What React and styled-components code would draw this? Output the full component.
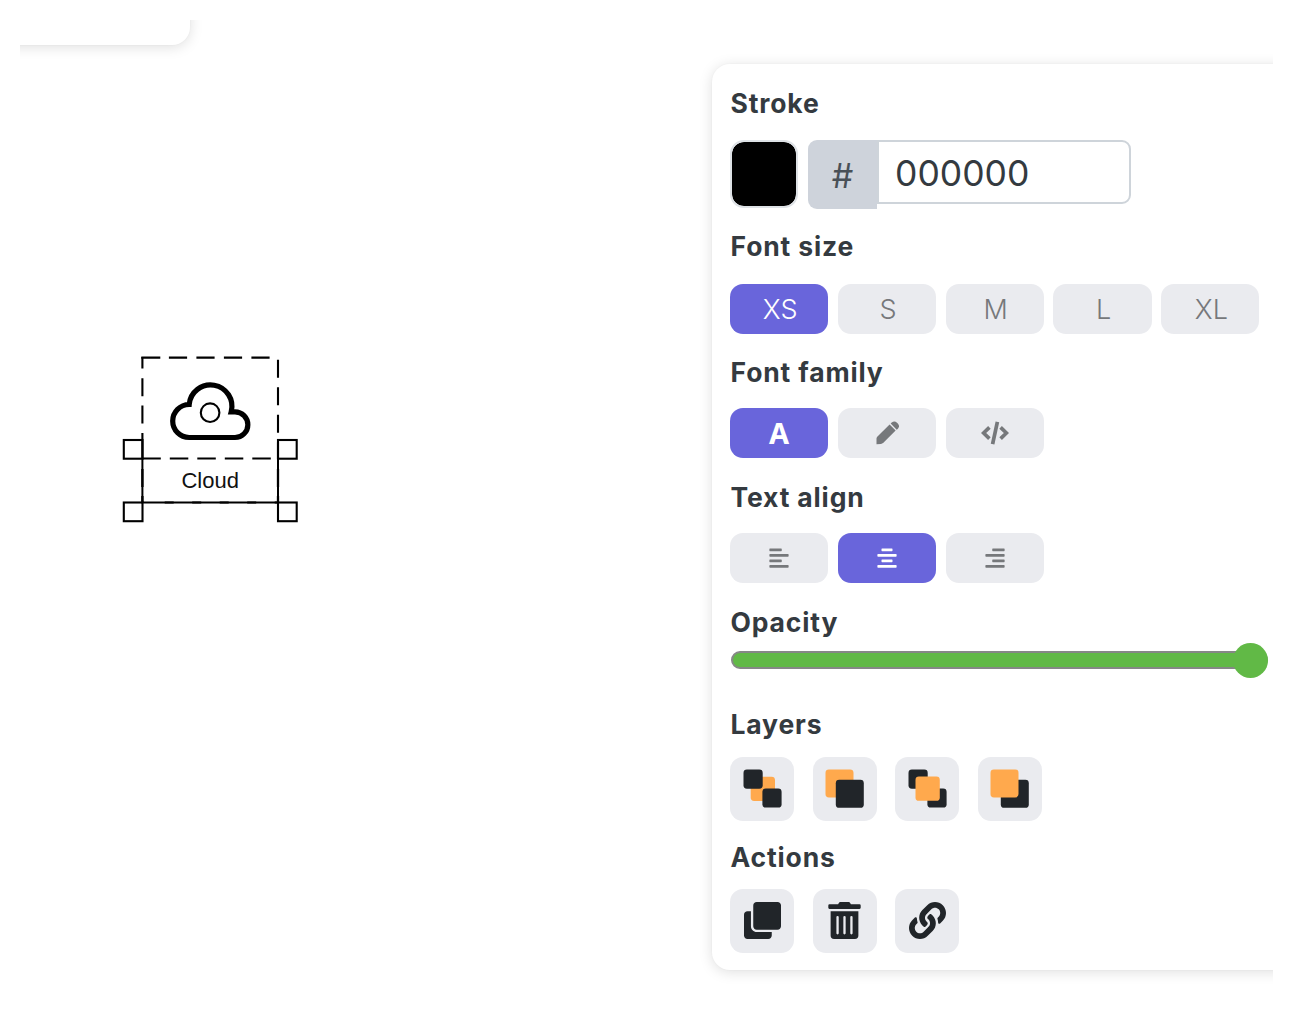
import React from "react";
import styled, { createGlobalStyle } from "styled-components";
import { FaAlignLeft, FaAlignCenter, FaAlignRight, FaClone, FaTrashAlt, FaLink } from "react-icons/fa";

const Global = createGlobalStyle`
  * { box-sizing: border-box; }
  body { margin: 0; background: #fff; }
`;

const Page = styled.div`
  width: 1293px;
  height: 1027px;
  padding: 20px;
  font-family: Inter, "Liberation Sans", sans-serif;
  color: #343a40;
`;

const Viewport = styled.main`
  width: 1253px;
  height: 987px;
  overflow: hidden;
  display: grid;
  grid-template-columns: 692px 600px;
  align-items: start;
`;

const Board = styled.section`
  display: flex;
  flex-direction: column;
  align-items: flex-start;
`;

const shadow = "0 0 0 1px rgba(0,0,0,0.012), 0 2px 14px rgba(0,0,0,0.13)";

const Toolbar = styled.header`
  width: 190px;
  height: 45px;
  margin: -20px 0 0 -20px;
  border-radius: 0 0 18px 0;
  box-shadow: ${shadow};
`;

const Drawing = styled.svg`
  display: block;
  width: 190px;
  height: 190px;
  margin: 300px 0 0 95px;
`;

const Panel = styled.aside`
  margin-top: 44px;
  height: 906px;
  padding: 26px 18px 0;
  border-radius: 18px;
  background: #fff;
  box-shadow: ${shadow};
`;

const Group = styled.section`
  height: ${(p) => p.$height}px;
`;

const Title = styled.h3`
  margin: 0 0 ${(p) => p.$gap}px 0.5px;
  padding-bottom: 2px;
  font-size: 26.5px;
  line-height: 26px;
  font-weight: 680;
  letter-spacing: 0.85px;
`;

const Row = styled.div`
  display: flex;
  gap: ${(p) => p.$gap}px;
`;

const Choice = styled.button`
  display: flex;
  align-items: center;
  justify-content: center;
  width: 98.3px;
  height: 50px;
  padding: ${(p) => (p.$text ? "2px 0 0 2px" : 0)};
  border: 0;
  border-radius: 13px;
  background: ${(p) => (p.$active ? "#6965db" : "#eaebef")};
  color: ${(p) => (p.$active ? "#fff" : "#76787b")};
  font: 350 27px Inter, sans-serif;
  svg { display: block; }
`;

const Letter = styled.span`
  margin-top: -2px;
  font: 700 29px "Noto Sans", sans-serif;
`;

const Tool = styled.button`
  display: grid;
  place-items: center;
  width: 64px;
  height: 64px;
  padding: 0;
  border: 0;
  border-radius: 13px;
  background: #eaebef;
  color: #212529;
  svg { display: block; }
`;

const Swatch = styled.button`
  width: 68px;
  height: 68px;
  margin: 0 10px 0 0;
  border: 2px solid #dee2e6;
  border-radius: 14px;
  background: #000;
  background-clip: padding-box;
`;

const Hash = styled.div`
  display: grid;
  place-items: center;
  width: 69px;
  height: 69px;
  padding-top: 2px;
  border-radius: 9px 0 0 9px;
  background: #ced3db;
  color: #495057;
  font-size: 34px;
  font-weight: 400;
`;

const HexInput = styled.input`
  width: 254px;
  height: 64px;
  padding: 3px 16px 0;
  border: 2px solid #ced4da;
  border-radius: 0 9px 9px 0;
  outline: 0;
  background: #fff;
  color: #343a40;
  font: 400 35.5px Inter, sans-serif;
`;

const Slider = styled.div`
  display: flex;
  align-items: center;
  width: 537px;
  height: 36px;
  margin-left: 1px;
`;

const Track = styled.div`
  flex: 1;
  height: 18px;
  border: 2px solid #868886;
  border-radius: 9px;
  background: #61b946;
`;

const Thumb = styled.div`
  width: 35px;
  height: 35px;
  margin-left: -35px;
  border-radius: 50%;
  background: #61b946;
`;

const PencilIcon = () => (
  <svg width="24" height="24" viewBox="0 0 24 24" fill="currentColor">
    <path d="M1.5 23.3V17.8Q1.5 16.4 2.5 15.4L14.6 3.6L20.6 9.6L8.6 21.6Q7.2 23 5.8 23.1Z" />
    <path d="M15.7 2.5L16.7 1.6Q19.4-.5 22 1.7L22.8 2.5Q25.2 5.1 22.9 7.7L21.7 8.7Z" />
  </svg>
);

const CodeIcon = () => (
  <svg width="28" height="24" viewBox="0 0 28 24" fill="none" stroke="currentColor" strokeWidth="3.7">
    <path d="M8.4 6.4L2.6 12L8.4 17.6M19.6 6.4L25.4 12L19.6 17.6" />
    <path d="M16.4 .8L11.6 23.2" />
  </svg>
);

const ORANGE = "#ffa94d";
const DARK = "#212529";

const LayerIcon = ({ squares }) => (
  <svg width="39" height="39" viewBox="0 0 39 39">
    {squares.map(([x, y, s, fill]) => (
      <rect key={`${x}-${y}`} x={x} y={y} width={s} height={s} rx="3.4" fill={fill} />
    ))}
  </svg>
);

const layers = [
  ["Send to back", [[7.7, 7.7, 24.3, ORANGE], [0.5, 0.5, 19.2, DARK], [19.4, 19.4, 19.2, DARK]]],
  ["Send backward", [[0.5, 0.5, 28, ORANGE], [10.8, 10.8, 28, DARK]]],
  ["Bring forward", [[0.5, 0.5, 19.2, DARK], [19.4, 19.4, 19.2, DARK], [7.5, 7.5, 24.3, ORANGE]]],
  ["Bring to front", [[10.8, 10.8, 28, DARK], [0.5, 0.5, 28, ORANGE]]],
];

function Diagram() {
  return (
    <Drawing viewBox="115 345 190 190" fill="none" stroke="#000">
      <g strokeWidth="2.1">
        <path d="M141.3 357.6H278.3" strokeDasharray="19 8.6 18.2 9.3 18.2 9.3 18.2 9.3 18.2 20" />
        <path d="M142.4 357V459" strokeDasharray="11.5 9.7 18 9.4 18 9.4 30" />
        <path d="M278 359.7V459" strokeDasharray="18 9.5" />
        <path d="M142.3 458.5H278" strokeDasharray="18.5 9" />
        <path d="M142.4 459V502.5H278V459" strokeWidth="2" />
        <path d="M142.4 469V487M142.4 496V502.5M278 469V487M278 496V502.5" strokeWidth="2.3" />
        <path d="M164.7 502.5H278" strokeWidth="2.2" strokeDasharray="9 18.5" />
        <rect x="123.8" y="440" width="18.7" height="18.7" />
        <rect x="278" y="440" width="18.7" height="18.7" />
        <rect x="123.8" y="502.5" width="18.7" height="18.7" />
        <rect x="278" y="502.5" width="18.7" height="18.7" />
        <circle cx="210.1" cy="412.7" r="9.3" />
      </g>
      <path strokeWidth="5.2" d="M189.2 404.5A21.4 21.4 0 1 1 231.2 411.8H235A12.85 12.85 0 0 1 235 437.5H189.2A16.5 16.5 0 0 1 189.2 404.5Z" />
      <text x="210.2" y="488.3" textAnchor="middle" fill="#111" stroke="none" fontFamily="Liberation Sans, sans-serif" fontSize="22">Cloud</text>
    </Drawing>
  );
}

export default function App() {
  return (
    <Page>
      <Global />
      <Viewport>
        <Board>
          <Toolbar />
          <Diagram />
        </Board>
        <Panel>
          <Group $height={143}>
            <Title $gap={22}>Stroke</Title>
            <Row $gap={0}>
              <Swatch aria-label="Stroke color" />
              <Hash>#</Hash>
              <HexInput defaultValue="000000" />
            </Row>
          </Group>
          <Group $height={126}>
            <Title $gap={22.5}>Font size</Title>
            <Row $gap={9.5}>
              {["XS", "S", "M", "L", "XL"].map((size) => (
                <Choice key={size} $text $active={size === "XS"}>{size}</Choice>
              ))}
            </Row>
          </Group>
          <Group $height={125}>
            <Title $gap={21}>Font family</Title>
            <Row $gap={9.5}>
              <Choice $active><Letter>A</Letter></Choice>
              <Choice><PencilIcon /></Choice>
              <Choice><CodeIcon /></Choice>
            </Row>
          </Group>
          <Group $height={125}>
            <Title $gap={21}>Text align</Title>
            <Row $gap={9.5}>
              <Choice><FaAlignLeft size={22} /></Choice>
              <Choice $active><FaAlignCenter size={22} /></Choice>
              <Choice><FaAlignRight size={22} /></Choice>
            </Row>
          </Group>
          <Group $height={101.5}>
            <Title $gap={5}>Opacity</Title>
            <Slider>
              <Track />
              <Thumb />
            </Slider>
          </Group>
          <Group $height={133}>
            <Title $gap={18}>Layers</Title>
            <Row $gap={18.6}>
              {layers.map(([label, squares]) => (
                <Tool key={label} aria-label={label}><LayerIcon squares={squares} /></Tool>
              ))}
            </Row>
          </Group>
          <Group $height={130}>
            <Title $gap={17}>Actions</Title>
            <Row $gap={18.6}>
              <Tool aria-label="Duplicate"><FaClone size={37} /></Tool>
              <Tool aria-label="Delete"><FaTrashAlt size={37} /></Tool>
              <Tool aria-label="Link"><FaLink size={37} /></Tool>
            </Row>
          </Group>
        </Panel>
      </Viewport>
    </Page>
  );
}
